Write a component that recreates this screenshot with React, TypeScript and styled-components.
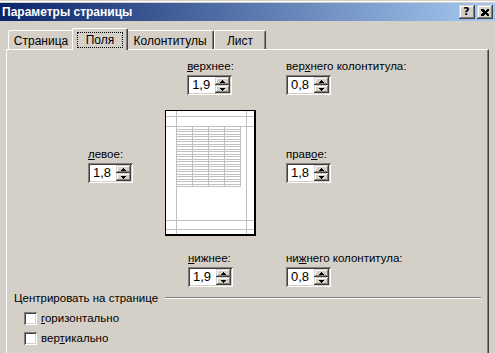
import React from 'react';
import styled, { createGlobalStyle } from 'styled-components';

const Global = createGlobalStyle`
  html, body { margin: 0; padding: 0; background: #D4D0C8; }
  body {
    width: 495px; height: 353px; overflow: hidden;
    font-family: "Liberation Sans", Tahoma, sans-serif;
    font-size: 11.5px; color: #000;
  }
  * { box-sizing: border-box; }
`;

const Window = styled.div`
  width: 495px;
  height: 353px;
  background: #D4D0C8;
  padding-top: 3px;
  box-shadow: inset 0 1px 0 #D4D0C8, inset 0 2px 0 #FFFFFF;
  display: flex;
  flex-direction: column;
  overflow: hidden;
`;

const TitleBar = styled.div`
  height: 18px;
  background: linear-gradient(to right, #0A246A, #A6CAF0);
  display: flex;
  align-items: center;
  padding: 0 2px 0 2px;
`;

const Title = styled.div`
  color: #fff;
  font-weight: bold;
  font-size: 12px;
  line-height: 18px;
  flex: 1;
  white-space: nowrap;
`;

const CaptionButtons = styled.div`
  display: flex;
  gap: 2px;
`;

const CaptionButton = styled.div`
  width: 16px;
  height: 14px;
  background: #D4D0C8;
  box-shadow: inset -1px -1px #404040, inset 1px 1px #D4D0C8, inset -2px -2px #808080, inset 2px 2px #FFFFFF;
  display: flex;
  align-items: center;
  justify-content: center;
  font-family: "DejaVu Sans", sans-serif;
  font-weight: bold;
  font-size: 11px;
  line-height: 14px;
  padding-right: 1px;
`;

const Client = styled.div`
  flex: 1;
  display: flex;
  flex-direction: column;
  padding: 8px 6px 0 6px;
`;

const TabRow = styled.div`
  display: flex;
  align-items: flex-end;
  padding-left: 2px;
  height: 21px;
  position: relative;
  z-index: 1;
  margin-bottom: -1px;
`;

const Tab = styled.div<{ $w: number; $active?: boolean }>`
  width: ${(p) => p.$w + (p.$active ? 4 : 0)}px;
  height: ${(p) => (p.$active ? 22 : 19)}px;
  margin: 0 ${(p) => (p.$active ? -2 : 0)}px ${(p) => (p.$active ? 0 : 1)}px;
  background: #D4D0C8;
  border-top: 1px solid #FFFFFF;
  border-left: 1px solid #FFFFFF;
  border-right: 1px solid #404040;
  border-radius: 2px 2px 0 0;
  box-shadow: inset -1px 0 #808080;
  display: flex;
  align-items: ${(p) => (p.$active ? 'flex-start' : 'center')};
  justify-content: center;
  padding-top: ${(p) => (p.$active ? 3 : 1)}px;
  position: relative;
  z-index: ${(p) => (p.$active ? 2 : 1)};
  white-space: nowrap;
  font-size: 12px;
`;

const TabLabel = styled.span<{ $focus?: boolean }>`
  display: inline-block;
  line-height: 14px;
  padding: 0 ${(p) => (p.$focus ? 8 : 0)}px;
  border: 1px dotted ${(p) => (p.$focus ? '#000' : 'transparent')};
`;

const Panel = styled.div`
  flex: 1;
  border-top: 1px solid #FFFFFF;
  border-left: 1px solid #FFFFFF;
  border-right: 1px solid #404040;
  box-shadow: inset -1px 0 #808080;
  display: flex;
  flex-direction: column;
  padding: 10px 7px 0 7px;
`;

const MarginsGrid = styled.div`
  display: grid;
  grid-template-columns: 77px 91px 1fr;
  padding-left: 74px;
`;

const Field = styled.div<{ $col: number; $row: number; $center?: boolean; $mt?: number; $ml?: number }>`
  grid-column: ${(p) => p.$col};
  grid-row: ${(p) => p.$row};
  justify-self: ${(p) => (p.$center ? 'center' : 'start')};
  align-self: ${(p) => (p.$row === 2 ? 'center' : 'start')};
  margin-top: ${(p) => p.$mt ?? 0}px;
  margin-left: ${(p) => p.$ml ?? 0}px;
  display: flex;
  flex-direction: column;
  gap: 2px;
`;

const Label = styled.div`
  line-height: 13px;
  white-space: nowrap;
`;

const Key = styled.span`
  text-decoration: underline;
`;

const SpinBox = styled.div`
  width: 45px;
  height: 20px;
  background: #FFFFFF;
  box-shadow: inset 1px 1px #808080, inset -1px -1px #FFFFFF, inset 2px 2px #404040, inset -2px -2px #D4D0C8;
  display: flex;
  padding: 2px;
`;

const SpinValue = styled.div`
  flex: 1;
  padding-left: 3px;
  line-height: 16px;
  font-size: 13px;
`;

const SpinButtons = styled.div`
  width: 15px;
  display: flex;
  flex-direction: column;
`;

const SpinButton = styled.div`
  flex: 1;
  background: #D4D0C8;
  box-shadow: inset -1px -1px #404040, inset 1px 1px #D4D0C8, inset -2px -2px #808080, inset 2px 2px #FFFFFF;
  display: flex;
  align-items: center;
  justify-content: center;
`;

const PageCell = styled.div`
  grid-column: 2;
  grid-row: 2;
  margin-top: 15px;
  width: 91px;
  height: 126px;
`;

const Group = styled.div`
  margin-top: 5px;
  display: flex;
  flex-direction: column;
`;

const GroupHead = styled.div`
  display: flex;
  align-items: flex-start;
  gap: 7px;
  line-height: 13px;
`;

const GroupLine = styled.div`
  flex: 1;
  height: 2px;
  margin-top: 5px;
  border-top: 1px solid #808080;
  border-bottom: 1px solid #FFFFFF;
`;

const CheckList = styled.div`
  display: flex;
  flex-direction: column;
  gap: 7px;
  padding: 7px 0 0 10px;
`;

const CheckRow = styled.label`
  display: flex;
  align-items: center;
  gap: 4px;
  height: 13px;
  line-height: 13px;
`;

const CheckBox = styled.span`
  width: 13px;
  height: 13px;
  background: #FFFFFF;
  box-shadow: inset 1px 1px #808080, inset -1px -1px #FFFFFF, inset 2px 2px #404040, inset -2px -2px #D4D0C8;
`;

const Arrow = ({ up }: { up?: boolean }) => (
  <svg width="5" height="3" viewBox="0 0 5 3" style={{ display: 'block' }}>
    {up ? <path d="M2 0h1v1h1v1h1v1H0V2h1V1h1z" fill="#000" /> : <path d="M0 0h5v1H4v1H3v1H2V2H1V1H0z" fill="#000" />}
  </svg>
);

const Spinner = ({ value }: { value: string }) => (
  <SpinBox>
    <SpinValue>{value}</SpinValue>
    <SpinButtons>
      <SpinButton><Arrow up /></SpinButton>
      <SpinButton><Arrow /></SpinButton>
    </SpinButtons>
  </SpinBox>
);

const PagePreview = () => {
  const rows: number[] = [];
  for (let i = 0; i <= 24; i++) rows.push(16 + Math.round(i * 2.5));
  const cols = [11, 27, 43, 59, 75];
  return (
    <svg width="91" height="126" viewBox="0 0 91 126" shapeRendering="crispEdges">
      <rect x="0" y="0" width="91" height="126" fill="#000" />
      <rect x="1" y="1" width="88" height="123" fill="#fff" />
      <g fill="#C0C0C0">
        <rect x="11" y="1" width="1" height="123" />
        <rect x="81" y="1" width="1" height="123" />
        <rect x="1" y="6" width="88" height="1" />
        <rect x="1" y="16" width="88" height="1" />
        <rect x="1" y="110" width="88" height="1" />
        <rect x="1" y="119" width="88" height="1" />
        {rows.map((y) => (
          <rect key={'r' + y} x="11" y={y} width="65" height="1" />
        ))}
        {cols.map((x) => (
          <rect key={'c' + x} x={x} y="16" width="1" height="61" />
        ))}
      </g>
    </svg>
  );
};

export default function App() {
  return (
    <>
      <Global />
      <Window>
        <TitleBar>
          <Title>Параметры страницы</Title>
          <CaptionButtons>
            <CaptionButton>?</CaptionButton>
            <CaptionButton>
              <svg width="8" height="7" viewBox="0 0 8 7" shapeRendering="crispEdges">
                <path d="M0 0h2l2 2 2-2h2v1L6 3.5 8 6v1H6L4 5 2 7H0V6l2-2.5L0 1z" fill="#000" />
              </svg>
            </CaptionButton>
          </CaptionButtons>
        </TitleBar>
        <Client>
          <TabRow>
            <Tab $w={66}><TabLabel>Страница</TabLabel></Tab>
            <Tab $w={52} $active><TabLabel $focus>Поля</TabLabel></Tab>
            <Tab $w={88}><TabLabel>Колонтитулы</TabLabel></Tab>
            <Tab $w={52}><TabLabel>Лист</TabLabel></Tab>
          </TabRow>
          <Panel>
            <MarginsGrid>
              <Field $col={2} $row={1} $center>
                <Label><Key>в</Key>ерхнее:</Label>
                <Spinner value="1,9" />
              </Field>
              <Field $col={3} $row={1} $ml={30}>
                <Label>вер<Key>х</Key>него колонтитула:</Label>
                <Spinner value="0,8" />
              </Field>
              <Field $col={1} $row={2}>
                <Label><Key>л</Key>евое:</Label>
                <Spinner value="1,8" />
              </Field>
              <PageCell><PagePreview /></PageCell>
              <Field $col={3} $row={2} $ml={30}>
                <Label>прав<Key>о</Key>е:</Label>
                <Spinner value="1,8" />
              </Field>
              <Field $col={2} $row={3} $center $mt={16}>
                <Label><Key>н</Key>ижнее:</Label>
                <Spinner value="1,9" />
              </Field>
              <Field $col={3} $row={3} $ml={30} $mt={16}>
                <Label>ни<Key>ж</Key>него колонтитула:</Label>
                <Spinner value="0,8" />
              </Field>
            </MarginsGrid>
            <Group>
              <GroupHead>
                <span>Центрировать на странице</span>
                <GroupLine />
              </GroupHead>
              <CheckList>
                <CheckRow><CheckBox /><span><Key>г</Key>оризонтально</span></CheckRow>
                <CheckRow><CheckBox /><span>вер<Key>т</Key>икально</span></CheckRow>
              </CheckList>
            </Group>
          </Panel>
        </Client>
      </Window>
    </>
  );
}
